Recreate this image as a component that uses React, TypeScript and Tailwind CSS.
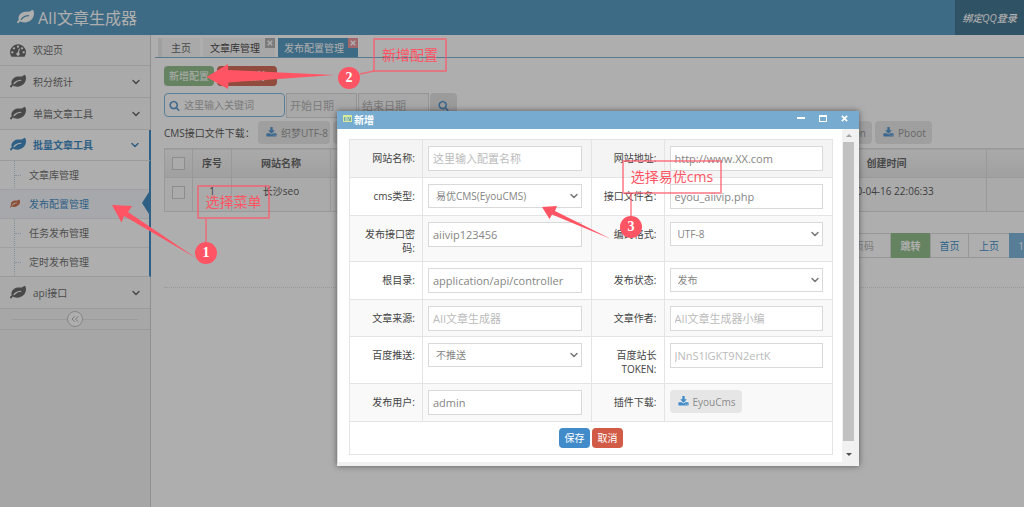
import type { ReactNode } from "react";
import { ChevronDown, ChevronsLeft } from "lucide-react";
import clsx from "clsx";

interface MenuItem {
  title: string;
  icon: string;
  open?: boolean;
  expandable?: boolean;
  children?: string[];
}

interface Callout {
  step: number;
  text: string;
  box: string;
  badge: string;
}

const ICONS = {
  leaf: "M1280 704q0-26-19-45t-45-19q-172 0-318 49.500t-259.500 134-235.500 219.500q-19 21-19 45 0 26 19 45t45 19q24 0 45-19 27-24 74-71t67-66q137-124 268.500-176t313.500-52q26 0 45-19t19-45zM1792 474q0 95-20 193-46 224-184.500 383t-357.500 268q-214 108-438 108-148 0-286-47-15-5-88-42t-96-37q-16 0-39.500 32t-45 70-52.500 70-60 32q-43 0-63.500-17.500t-45.500-59.500q-2-4-6-11t-5.500-10-3-9.500-1.500-13.500q0-35 31-73.500t68-65.500 68-56 31-48q0-4-14-38t-16-44q-9-51-9-104 0-115 43.500-220t119-184.500 170.500-139 204-95.500q55-18 145-25.500t179.500-9 178.500-6 163.500-24 113.500-56.500l29.500-29.500 29.500-28 27-20 36.500-16 43.500-4.500q39 0 70.500 46t47.500 112 24 124 8 96z",
  dashboard: "M384 1152q0-53-37.500-90.500t-90.500-37.500-90.500 37.500-37.500 90.500 37.500 90.500 90.500 37.500 90.500-37.500 37.500-90.500zm192-448q0-53-37.500-90.500t-90.500-37.500-90.500 37.500-37.500 90.500 37.500 90.500 90.500 37.500 90.500-37.500 37.500-90.500zm428 481l101-382q6-26-7.500-48.500t-38.500-29.500-48 6.500-30 39.500l-101 382q-60 5-107 43.500t-63 98.500q-20 77 20 146t117 89 146-20 89-117q16-60-6-117t-72-91zm660-33q0-53-37.500-90.500t-90.500-37.500-90.500 37.500-37.500 90.500 37.500 90.500 90.500 37.500 90.500-37.500 37.500-90.500zm-640-640q0-53-37.500-90.500t-90.500-37.500-90.500 37.500-37.500 90.500 37.500 90.500 90.500 37.500 90.500-37.500 37.500-90.500zm448 192q0-53-37.500-90.500t-90.500-37.500-90.500 37.500-37.500 90.500 37.500 90.500 90.500 37.500 90.500-37.500 37.500-90.500zm320 448q0 261-141 483-19 29-54 29h-1402q-35 0-54-29-141-221-141-483 0-182 71-348t191-286 286-191 348-71 348 71 286 191 191 286 71 348z",
  download: "M1344 1344q0-26-19-45t-45-19-45 19-19 45 19 45 45 19 45-19 19-45zm256 0q0-26-19-45t-45-19-45 19-19 45 19 45 45 19 45-19 19-45zm128-224v320q0 40-28 68t-68 28h-1472q-40 0-68-28t-28-68v-320q0-40 28-68t68-28h465l135 136q58 56 136 56t136-56l136-136h464q40 0 68 28t28 68zm-325-569q17 41-14 70l-448 448q-18 19-45 19t-45-19l-448-448q-31-29-14-70 17-39 59-39h256v-448q0-26 19-45t45-19h256q26 0 45 19t19 45v448h256q42 0 59 39z",
  search: "M1216 832q0-185-131.500-316.500t-316.500-131.500-316.500 131.500-131.500 316.500 131.500 316.500 316.500 131.500 316.500-131.500 131.500-316.500zm512 832q0 52-38 90t-90 38q-54 0-90-38l-343-342q-179 124-399 124-143 0-273.500-55.500t-225-150-150-225-55.500-273.500 55.500-273.500 150-225 225-150 273.500-55.500 273.500 55.500 225 150 150 225 55.500 273.500q0 220-124 399l343 343q37 37 37 90z",
};

const MENU: MenuItem[] = [
  { title: "欢迎页", icon: ICONS.dashboard },
  { title: "积分统计", icon: ICONS.leaf, expandable: true },
  { title: "单篇文章工具", icon: ICONS.leaf, expandable: true },
  {
    title: "批量文章工具",
    icon: ICONS.leaf,
    expandable: true,
    open: true,
    children: ["文章库管理", "发布配置管理", "任务发布管理", "定时发布管理"],
  },
  { title: "api接口", icon: ICONS.leaf, expandable: true },
];

const DOWNLOADS = ["织梦GBK", "帝国CMS", "Wordpress", "Zblog", "Discuz", "Destoon"];

const CALLOUTS: Callout[] = [
  { step: 1, text: "选择菜单", box: "left-[197px] top-[185px] w-[73px]", badge: "left-[195px] top-[242px]" },
  { step: 2, text: "新增配置", box: "left-[373px] top-[38px] w-[74px]", badge: "left-[338px] top-[67px]" },
  { step: 3, text: "选择易优cms", box: "left-[622px] top-[160px] w-[100px]", badge: "left-[620px] top-[216px]" },
];

function Icon({ d, className }: { d: string; className: string }) {
  return (
    <svg viewBox="0 0 1792 1792" className={clsx("shrink-0 fill-current", className)} aria-hidden="true">
      <path d={d} />
    </svg>
  );
}

function CloseMark({ className }: { className?: string }) {
  return (
    <svg viewBox="0 0 8 8" className={className} aria-hidden="true">
      <path d="M1 1l6 6M7 1L1 7" stroke="currentColor" strokeWidth="2" />
    </svg>
  );
}

function Sidebar() {
  return (
    <nav className="w-[151px] shrink-0 border-r border-[#ccc] bg-[#f2f2f2]">
      <ul>
        {MENU.map((item) => (
          <li key={item.title} className="group">
            <a
              href="#"
              className={clsx(
                "flex items-center border-b border-[#e0e0e0] pl-[10px] pr-2 group-first:h-[31px]",
                item.open
                  ? "-mr-px h-[31px] border-r-2 border-r-[#2b7dbc] bg-white font-bold text-[#2b7dbc]"
                  : "h-8 bg-[#f8f8f8] text-[#585858]"
              )}
            >
              <Icon d={item.icon} className="mr-[7px] size-4" />
              <span className="flex-1">{item.title}</span>
              {item.expandable && <ChevronDown className="size-3" strokeWidth={3} aria-hidden="true" />}
            </a>
            {item.children && (
              <ul className="relative -mr-px border-b border-r-2 border-b-[#e0e0e0] border-r-[#2b7dbc] bg-white">
                <li className="absolute bottom-0 left-[14px] top-0 border-l border-dotted border-[#b9cfdf]" aria-hidden="true" />
                {item.children.map((child, i) => (
                  <li key={child} className="relative h-[29px] border-b border-[#e8e8e8] last:h-7 last:border-b-0">
                    <a
                      href="#"
                      className={clsx(
                        "flex h-full items-center",
                        i === 1 ? "bg-[#f3f6fa] pl-[10px] text-[#2b7dbc]" : "pl-[15px] text-[#616161]"
                      )}
                    >
                      {i === 1 ? (
                        <Icon d={ICONS.leaf} className="mr-[9px] size-[10px] text-[#c86139]" />
                      ) : (
                        <span className="mr-2 w-[6px] border-t border-dotted border-[#b9cfdf]" />
                      )}
                      {child}
                    </a>
                    {i === 1 && (
                      <svg viewBox="0 0 7 22" className="absolute right-0 top-[2px] h-[22px] w-[7px] fill-[#2b7dbc]" aria-hidden="true">
                        <path d="M7 0v22L0 11z" />
                      </svg>
                    )}
                  </li>
                ))}
              </ul>
            )}
          </li>
        ))}
      </ul>
      <div className="flex h-[21px] items-center border-b border-[#e0e0e0] bg-[#f3f3f3] px-3">
        <span className="flex-1 border-t border-[#e0e0e0]" />
        <button className="flex size-4 items-center justify-center rounded-full border border-[#bbb] bg-white text-[#aaa]" aria-label="收起菜单">
          <ChevronsLeft className="size-3" aria-hidden="true" />
        </button>
        <span className="flex-1 border-t border-[#e0e0e0]" />
      </div>
    </nav>
  );
}

function DownloadButton({ name, className }: { name: string; className?: string }) {
  return (
    <button
      className={clsx(
        "flex h-[23px] items-center gap-1 whitespace-nowrap rounded-sm bg-[#e6e6e6] text-[10px] text-[#8b8b8b]",
        className ?? "px-2"
      )}
    >
      <Icon d={ICONS.download} className="size-[11px] text-[#428bca]" />
      {name}
    </button>
  );
}

function TabBar() {
  return (
    <div className="ml-1 flex h-[23px] items-end gap-[3px] border-b border-[#6fa9cc] pl-[3px] leading-none">
      <a href="#" className="flex h-[19px] w-[42px] items-center border-l-4 border-[#e8e8e8] bg-[#f7f7f7] pl-[9px] text-[#555]">
        主页
      </a>
      <a href="#" className="relative flex h-[19px] w-[72px] items-center bg-[#f3f3f3] pl-[7px] text-[#333]">
        文章库管理
        <span className="absolute right-0 top-0 flex size-[10px] items-center justify-center bg-[#aaa] text-white">
          <CloseMark className="size-[6px]" />
        </span>
      </a>
      <a href="#" className="relative flex h-[19px] w-20 items-center bg-[#438eb9] pl-[6px] text-white">
        发布配置管理
        <span className="absolute right-0 top-0 flex size-[10px] items-center justify-center bg-[#e88a92] text-white">
          <CloseMark className="size-[6px]" />
        </span>
      </a>
    </div>
  );
}

function Content() {
  return (
    <main className="min-w-0 flex-1 overflow-hidden bg-white text-[#444]">
      <TabBar />
      <div className="pl-[13px] pt-2">
        <div className="flex gap-[3px]">
          <button className="h-5 w-[50px] rounded-sm bg-[#87b87f] text-white">新增配置</button>
          <button className="h-5 w-[60px] rounded-sm bg-[#d15b47] text-white">批量删除</button>
        </div>

        <div className="mt-[7px] flex items-start gap-px">
          <label className="flex h-6 w-[121px] items-center gap-1 rounded-[4px] border border-[#6fb3e0] pl-1">
            <Icon d={ICONS.search} className="size-[11px] text-[#478fca]" />
            <input className="w-full min-w-0 outline-none placeholder:text-[#aaa]" placeholder="这里输入关键词" />
          </label>
          <input aria-label="开始日期" placeholder="开始日期" className="h-[25px] w-[71px] border border-[#d5d5d5] bg-[#f5f5f5] px-[3px] text-[11px] placeholder:text-[#aaa]" />
          <input aria-label="结束日期" placeholder="结束日期" className="h-[25px] w-[71px] border border-[#d5d5d5] bg-[#f5f5f5] px-[3px] text-[11px] placeholder:text-[#aaa]" />
          <button aria-label="搜索" className="flex h-6 w-[27px] items-center justify-center rounded-sm bg-[#e0e0e0] text-[#428bca]">
            <Icon d={ICONS.search} className="size-[11px]" />
          </button>
        </div>

        <div className="mt-[3px] flex items-center gap-[3px]">
          <span className="w-[91px] shrink-0">CMS接口文件下载：</span>
          <DownloadButton name="织梦UTF-8" className="w-[72px] shrink-0 px-2" />
          <div className="flex w-[539px] shrink-0 gap-[3px]">
            {DOWNLOADS.map((name) => (
              <DownloadButton key={name} name={name} className="flex-1 justify-end pr-[6px]" />
            ))}
          </div>
          <DownloadButton name="Pboot" className="shrink-0 pl-2 pr-[6px]" />
        </div>

        <table className="mt-1 w-full min-w-[1000px] table-fixed border-collapse text-center">
          <thead>
            <tr className="h-[29px] border border-[#ddd] bg-linear-to-b from-[#f8f8f8] to-[#e8e8e8] text-[#555]">
              <th className="w-7 border-r border-[#ddd]">
                <input type="checkbox" aria-label="全选" className="mx-auto block size-[13px] appearance-none border border-[#c8c8c8] bg-[#fafafa]" />
              </th>
              <th className="w-[39px] border-r border-[#ddd]">序号</th>
              <th className="w-[99px] border-r border-[#ddd]">网站名称</th>
              <th className="w-[456px] border-r border-[#ddd]">网站地址</th>
              <th className="w-[200px] border-r border-[#ddd]">创建时间</th>
              <th>操作</th>
            </tr>
          </thead>
          <tbody>
            <tr className="h-[34px] border border-[#ddd] bg-[#f9f9f9] align-top">
              <td className="border-r border-[#ddd] pt-2">
                <input type="checkbox" aria-label="选择长沙seo" className="mx-auto block size-[13px] appearance-none border border-[#c8c8c8] bg-[#fafafa]" />
              </td>
              <td className="border-r border-[#ddd] pt-[6px]">1</td>
              <td className="border-r border-[#ddd] pt-[6px]">长沙seo</td>
              <td className="border-r border-[#ddd] pt-[6px]">http://www.XX.com</td>
              <td className="border-r border-[#ddd] pt-[6px]">2020-04-16 22:06:33</td>
              <td />
            </tr>
          </tbody>
        </table>

        <div className="mt-[21px] flex h-[25px] pl-[650px] text-[#2283c5]">
          <input aria-label="页码" placeholder="输入页码" className="w-[77px] shrink-0 border border-[#d9d9d9] pr-4 text-right placeholder:text-[#aaa]" />
          <button className="w-[39px] shrink-0 bg-[#87b87f] font-bold text-white">跳转</button>
          <a href="#" className="flex w-[39px] shrink-0 items-center justify-center border border-[#d9d9d9]">首页</a>
          <a href="#" className="flex w-10 shrink-0 items-center justify-center border-y border-[#d9d9d9]">上页</a>
          <a href="#" className="flex w-6 shrink-0 items-center justify-center bg-[#6faed9] text-white">1</a>
        </div>
        <hr className="mt-[29px] border-dotted border-[#ddd]" />
      </div>
    </main>
  );
}

function Field({ id, label, children }: { id: string; label: string; children: ReactNode }) {
  return (
    <>
      <th scope="row" className="border border-[#e4e4e4] pl-[5px] pr-[7px] pt-[11px] text-right font-normal leading-[14px] text-[#444]">
        <label htmlFor={id}>{label}</label>
      </th>
      <td className="border border-[#e4e4e4] pl-[5px] pr-[9px] pt-[6px]">{children}</td>
    </>
  );
}

function TextBox({ id, value, placeholder }: { id: string; value?: string; placeholder?: string }) {
  return (
    <input
      id={id}
      defaultValue={value}
      placeholder={placeholder}
      className="block h-[25px] w-full border border-[#d9d9d9] bg-white px-1 pb-px text-[11px] text-[#858585] outline-none placeholder:text-[#bbb]"
    />
  );
}

function Select({ id, value }: { id: string; value: string }) {
  return (
    <div className="relative">
      <select id={id} className="block h-6 w-full appearance-none border border-[#d9d9d9] bg-white pl-[7px] pr-5 text-[#858585] outline-none">
        <option>{value}</option>
      </select>
      <ChevronDown className="pointer-events-none absolute right-[2px] top-[6px] size-3 text-[#777]" strokeWidth={3} aria-hidden="true" />
    </div>
  );
}

function ConfigDialog() {
  return (
    <section role="dialog" aria-label="新增" className="absolute left-[337px] top-[111px] w-[522px] bg-white text-[#444] shadow-[0_0_6px_rgba(0,0,0,0.5)]">
      <header className="flex h-[18px] items-center bg-[#77acd0] pl-[6px] pr-[11px] text-white">
        <svg viewBox="0 0 9 7" className="mb-1 mr-[2px] h-[7px] w-[9px]" aria-hidden="true">
          <path d="M0 0h9v7H0z" fill="#d9e99a" />
          <path d="M1 2h7v4H1z" fill="#6fa9a8" />
          <path d="M2 3h3M2 5h4M6 3h1" stroke="#e8f3c0" strokeWidth="1" />
        </svg>
        <h2 className="flex-1 font-bold leading-none">新增</h2>
        <div className="mb-1 flex items-center gap-[14px]">
          <button aria-label="最小化" className="h-[2px] w-2 bg-white" />
          <button aria-label="最大化" className="h-[7px] w-2 border border-t-2 border-white" />
          <button aria-label="关闭">
            <CloseMark className="size-[7px]" />
          </button>
        </div>
      </header>
      <div className="flex border-b-4 border-l border-r-4 border-[#f0f0f0] border-l-[#ddd]">
        <form className="flex-1 pb-[7px] pl-[11px] pr-[9px] pt-[10px]">
          <table className="w-full table-fixed border-collapse">
            <colgroup>
              <col className="w-[73px]" />
              <col />
              <col className="w-[73px]" />
              <col />
            </colgroup>
            <tbody>
              <tr className="h-[38px] bg-[#f4f4f4] align-top">
                <Field id="site-name" label="网站名称:"><TextBox id="site-name" placeholder="这里输入配置名称" /></Field>
                <Field id="site-url" label="网站地址:"><TextBox id="site-url" value="http://www.XX.com" /></Field>
              </tr>
              <tr className="h-[38px] align-top">
                <Field id="cms-type" label="cms类型:"><Select id="cms-type" value="易优CMS(EyouCMS)" /></Field>
                <Field id="file-name" label="接口文件名:"><TextBox id="file-name" value="eyou_aiivip.php" /></Field>
              </tr>
              <tr className="h-[46px] bg-[#f9f9f9] align-top">
                <Field id="password" label="发布接口密码:"><TextBox id="password" value="aiivip123456" /></Field>
                <Field id="encoding" label="编码格式:"><Select id="encoding" value="UTF-8" /></Field>
              </tr>
              <tr className="h-[38px] align-top">
                <Field id="root" label="根目录:"><TextBox id="root" value="application/api/controller" /></Field>
                <Field id="status" label="发布状态:"><Select id="status" value="发布" /></Field>
              </tr>
              <tr className="h-[37px] bg-[#f9f9f9] align-top">
                <Field id="source" label="文章来源:"><TextBox id="source" placeholder="AII文章生成器" /></Field>
                <Field id="author" label="文章作者:"><TextBox id="author" placeholder="AII文章生成器小编" /></Field>
              </tr>
              <tr className="h-[47px] align-top">
                <Field id="push" label="百度推送:"><Select id="push" value="不推送" /></Field>
                <Field id="token" label="百度站长TOKEN:"><TextBox id="token" placeholder="JNnS1lGKT9N2ertK" /></Field>
              </tr>
              <tr className="h-[38px] bg-[#f9f9f9] align-top">
                <Field id="user" label="发布用户:"><TextBox id="user" value="admin" /></Field>
                <Field id="plugin" label="插件下载:"><DownloadButton name="EyouCms" className="pl-2 pr-[6px]" /></Field>
              </tr>
              <tr className="h-[33px]">
                <td colSpan={4} className="border border-[#e4e4e4]">
                  <div className="flex justify-center gap-[2px]">
                    <button type="button" className="h-5 w-[31px] rounded-sm bg-[#428bca] text-white">保存</button>
                    <button type="button" className="h-5 w-[31px] rounded-sm bg-[#d15b47] text-white">取消</button>
                  </div>
                </td>
              </tr>
            </tbody>
          </table>
        </form>
        <div className="flex w-[13px] flex-col items-center justify-between bg-[#f1f1f1] pb-[6px] pt-[5px]" aria-hidden="true">
          <svg viewBox="0 0 6 3" className="h-[3px] w-[6px] fill-[#a3a3a3]"><path d="M0 3l3-3 3 3z" /></svg>
          <div className="mb-3 mt-[5px] w-[11px] flex-1 bg-[#c1c1c1]" />
          <svg viewBox="0 0 6 3" className="h-[3px] w-[6px] fill-[#505050]"><path d="M0 0l3 3 3-3z" /></svg>
        </div>
      </div>
    </section>
  );
}

function Callouts() {
  return (
    <div className="pointer-events-none absolute inset-0">
      <svg viewBox="0 0 1024 507" className="absolute left-0 top-0 h-[507px] w-[1024px]" fill="#ff5464" aria-hidden="true">
        <path d="M112 205L132 206L128 212L196 258L124 216L121.500 222.500z" />
        <path d="M206.500 77L228 64V70L334 75L228.500 82.500L228 89z" />
        <path d="M542 207L557 206L555 211L611 239L552 214.500L549.500 219z" />
        <path d="M206 219v24M374 71l-14 3M631 193v24" stroke="#ff5464" strokeOpacity="0.750" strokeWidth="1.500" />
      </svg>
      {CALLOUTS.map((c) => (
        <div key={c.step}>
          <p className={clsx("absolute flex h-[34px] items-center justify-center rounded-[1px] border-2 border-[#ff5464]/60 text-sm text-[#ff5464]", c.box)}>
            {c.text}
          </p>
          <span
            className={clsx(
              "absolute flex size-[22px] items-center justify-center rounded-full bg-[#ff5464] font-['Liberation_Serif',serif] text-sm font-bold leading-none text-white",
              c.badge
            )}
          >
            {c.step}
          </span>
        </div>
      ))}
    </div>
  );
}

export default function App() {
  return (
    <div className="relative flex min-h-screen flex-col overflow-hidden font-['Open_Sans','Noto_Sans_CJK_SC',sans-serif] text-[10px] leading-[14px]">
      <header className="flex h-[35px] items-center bg-[#438eb9] text-white">
        <h1 className="flex flex-1 items-center gap-1 pl-[17px] text-base">
          <Icon d={ICONS.leaf} className="size-[17px]" />
          AII文章生成器
        </h1>
        <a href="#" className="flex h-full w-[69px] items-center justify-center bg-[#2e6685] font-medium italic">
          绑定QQ登录
        </a>
      </header>
      <div className="flex flex-1">
        <Sidebar />
        <Content />
      </div>
      <div className="absolute inset-0 bg-[#343434]/40" />
      <ConfigDialog />
      <Callouts />
    </div>
  );
}
